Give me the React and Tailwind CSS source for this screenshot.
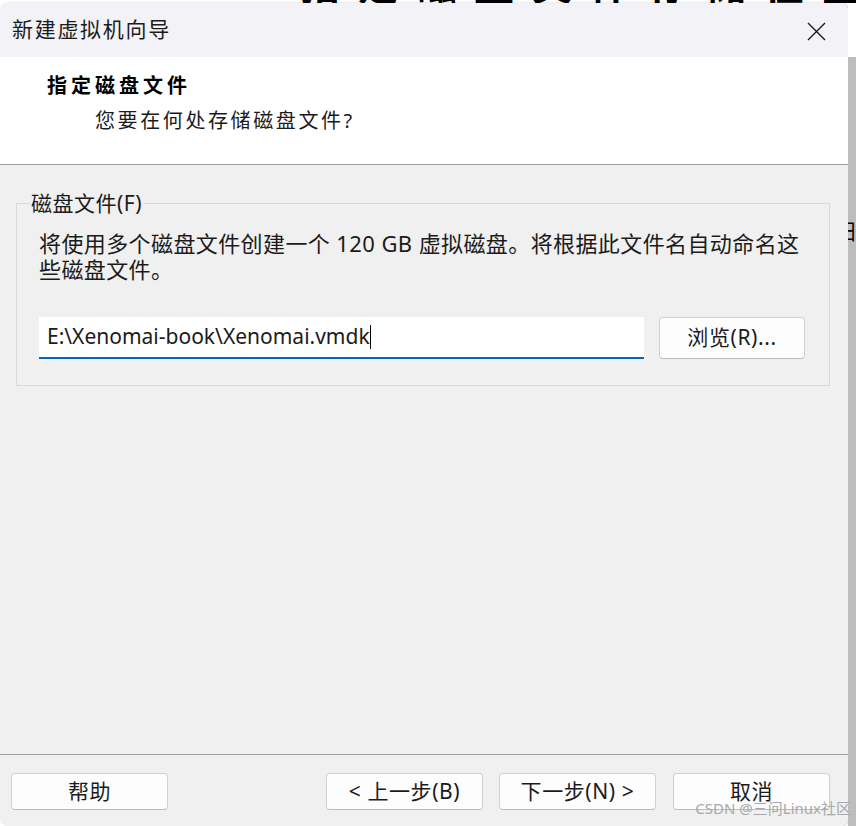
export default function App() {
    const font = "font-['Noto_Sans','Noto_Sans_CJK_SC',sans-serif]";
    const btn = "h-[37px] w-[157px] rounded-[4px] border border-[#d0d0d0] border-b-[#bcbcbc] bg-[#fdfdfd] text-[21px] tracking-[0.6px] text-[#1b1b1b] flex items-center justify-center";

    return (
        <div className={`relative w-[856px] h-[826px] bg-white overflow-hidden flex flex-col ${font}`}>
            {/* text of the page behind the dialog, only its bottom edge shows */}
            <div className="h-[3px] overflow-hidden pl-[300px]">
                <div className="-mt-[35px] text-[40px] leading-[40px] font-bold text-black tracking-[18px] whitespace-nowrap">
                    指定磁盘文件存储位置
                </div>
            </div>

            <div className="flex flex-1 min-h-0">
                <div className="w-[849px] h-[823px] flex flex-col rounded-[8px] overflow-hidden shadow-[1px_0_2px_rgba(0,0,0,0.25)]">
                    {/* title bar */}
                    <div className="h-[54px] bg-[#f2f2f7] flex items-center justify-between pl-[12px] pr-[22px]">
                        <span className="text-[21px] text-[#1b1b1b] tracking-[1.7px]">新建虚拟机向导</span>
                        <svg width="19" height="19" viewBox="0 0 19 19" className="mt-[2px]">
                            <path d="M1 1 L18 18 M18 1 L1 18" stroke="#1b1b1b" strokeWidth="1.4" fill="none" />
                        </svg>
                    </div>

                    {/* header */}
                    <div className="h-[108px] bg-white border-b border-[#a0a0a0] pt-[15px]">
                        <div className="pl-[47px] text-[20px] leading-[28px] font-bold tracking-[4px] text-black">指定磁盘文件</div>
                        <div className="pl-[95px] mt-[7px] text-[20px] leading-[28px] tracking-[2.6px] text-[#1b1b1b]">您要在何处存储磁盘文件?</div>
                    </div>

                    {/* body */}
                    <div className="flex-1 bg-[#f0f0f0] pl-[16px] pr-[18px] pt-[25px]">
                        <fieldset className="border border-[#d9d9d9] pb-[26px] pl-[22px] pr-[24px]">
                            <legend className="ml-[-9px] px-[1px] text-[21px] leading-[26px] tracking-[0.5px] text-[#1b1b1b]">磁盘文件(F)</legend>
                            <p className="mt-[14px] text-[22px] leading-[26px] text-[#1b1b1b] tracking-[0.4px] whitespace-nowrap">
                                将使用多个磁盘文件创建一个 120 GB 虚拟磁盘。将根据此文件名自动命名这
                                <br />
                                些磁盘文件。
                            </p>
                            <div className="mt-[35px] flex gap-[15px]">
                                <div className="w-[605px] h-[42px] bg-white border-b-2 border-[#0067c0] flex items-center pl-[8px]">
                                    <span className="text-[21px] text-[#1b1b1b]">E:\Xenomai-book\Xenomai.vmdk</span>
                                    <span className="w-px h-[24px] bg-black" />
                                </div>
                                <div className="w-[146px] h-[42px] rounded-[4px] border border-[#d0d0d0] border-b-[#bcbcbc] bg-[#fdfdfd] flex items-center justify-center text-[21px] tracking-[0.6px] text-[#1b1b1b]">
                                    浏览(R)...
                                </div>
                            </div>
                        </fieldset>
                    </div>

                    {/* footer */}
                    <div className="h-[72px] bg-[#f0f0f0] border-t border-[#a0a0a0] pt-[18px] pl-[11px] pr-[18px] flex justify-between items-start">
                        <div className={btn}>帮助</div>
                        <div className="flex gap-[16px]">
                            <div className={btn}>&lt; 上一步(B)</div>
                            <div className={`${btn} border-[#0067c0] border-b-[#0067c0]`}>下一步(N) &gt;</div>
                            <div className={`${btn} ml-[1px]`}>取消</div>
                        </div>
                    </div>
                </div>

                {/* sliver of the window behind */}
                <div className="flex-1 flex flex-col">
                    <div className="h-[54px] bg-white" />
                    <div className="flex-1 bg-[#bdbdbd] overflow-hidden pt-[160px]">
                        <div className="text-[22px] leading-[26px] text-black whitespace-nowrap -ml-[14px]">扫</div>
                    </div>
                </div>
            </div>

            <div className="absolute right-[5px] bottom-[9px] text-[15px] leading-[18px] text-[#a8a8a8] whitespace-nowrap">
                CSDN @三问Linux社区
            </div>
        </div>
    );
}
